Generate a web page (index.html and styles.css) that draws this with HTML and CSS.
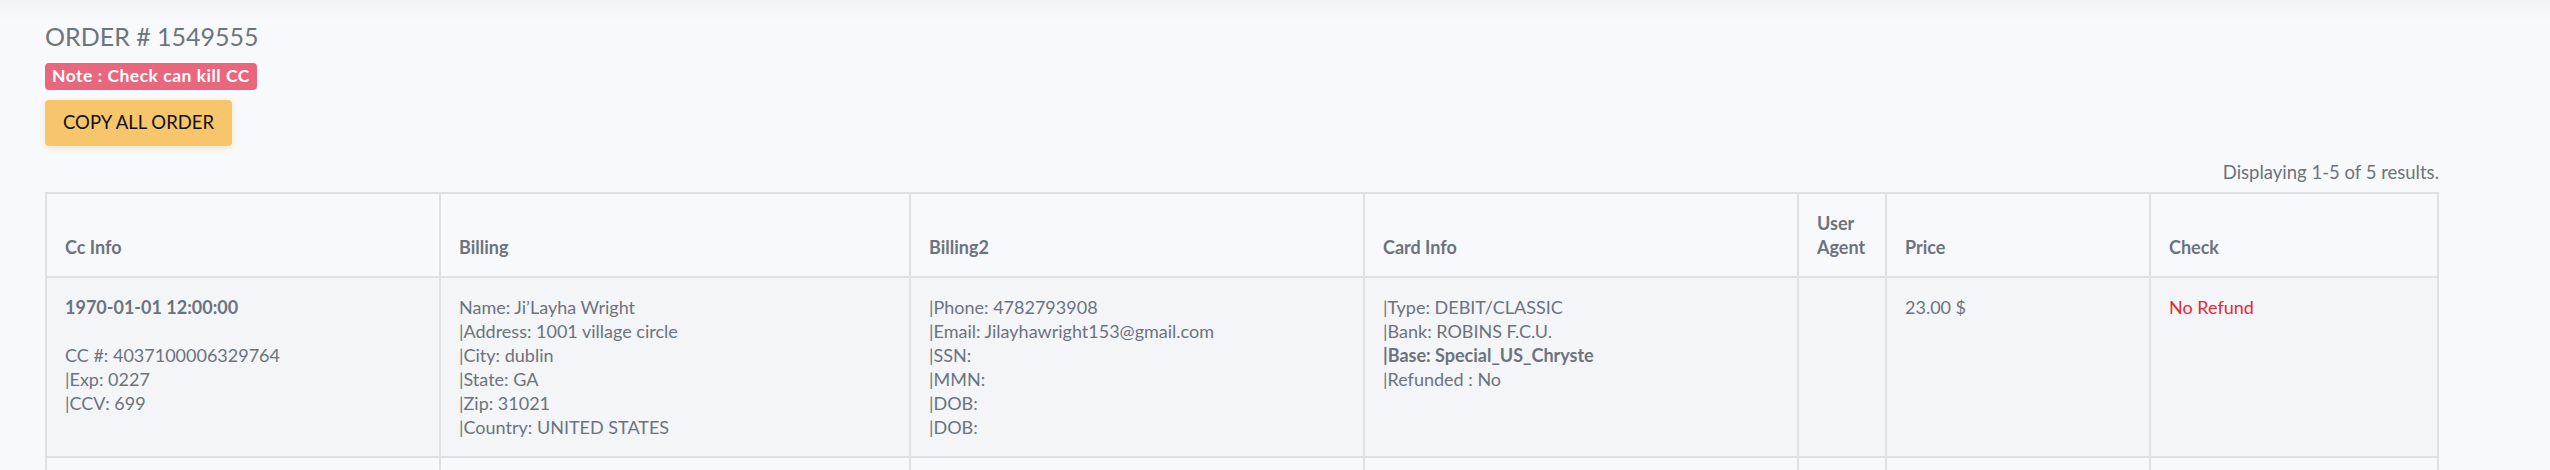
FILE: index.html
```html
<!DOCTYPE html>
<html lang="en">
<head>
    <meta charset="UTF-8">
    <meta name="viewport" content="width=device-width, initial-scale=1.0">
    <title>Order # 1549555</title>
    <link rel="stylesheet" href="styles.css">
</head>
<body>
    <div class="topbar"></div>

    <div class="content">
        <h1 class="order-title">ORDER # 1549555</h1>
        <div><span class="badge">Note : Check can kill CC</span></div>
        <button class="btn-copy">COPY ALL ORDER</button>

        <div class="orders">
            <div class="summary">Displaying 1-5 of 5 results.</div>
            <table class="order-table">
                <thead>
                    <tr>
                        <th class="col-cc">Cc Info</th>
                        <th class="col-billing">Billing</th>
                        <th class="col-billing2">Billing2</th>
                        <th class="col-card">Card Info</th>
                        <th class="col-agent">User Agent</th>
                        <th class="col-price">Price</th>
                        <th class="col-check">Check</th>
                    </tr>
                </thead>
                <tbody>
                    <tr class="odd">
                        <td>
                            <b>1970-01-01 12:00:00</b><br><br>
                            CC #: 4037100006329764<br>
                            |Exp: 0227<br>
                            |CCV: 699
                        </td>
                        <td>
                            Name: Ji’Layha Wright<br>
                            |Address: 1001 village circle<br>
                            |City: dublin<br>
                            |State: GA<br>
                            |Zip: 31021<br>
                            |Country: UNITED STATES
                        </td>
                        <td>
                            |Phone: 4782793908<br>
                            |Email: Jilayhawright153@gmail.com<br>
                            |SSN: <br>
                            |MMN: <br>
                            |DOB: <br>
                            |DOB: 
                        </td>
                        <td>
                            |Type: DEBIT/CLASSIC<br>
                            |Bank: ROBINS F.C.U.<br>
                            <b>|Base: Special_US_Chryste</b><br>
                            |Refunded : No
                        </td>
                        <td></td>
                        <td>23.00 $</td>
                        <td><span class="no-refund">No Refund</span></td>
                    </tr>
                    <tr class="even">
                        <td></td>
                        <td></td>
                        <td></td>
                        <td></td>
                        <td></td>
                        <td></td>
                        <td></td>
                    </tr>
                </tbody>
            </table>
        </div>
    </div>
</body>
</html>
```

FILE: styles.css
```css
* {
    box-sizing: border-box;
}
body {
    margin: 0;
    font-family: 'Lato', 'Liberation Sans', sans-serif;
    background-color: #f8f9fc;
    color: #6c737d;
}
.topbar {
    height: 21px;
    background: linear-gradient(180deg, #f2f3f6, #f8f9fc);
}
.content {
    padding: 0 0 0 45px;
}
.order-title {
    margin: 0;
    font-size: 25px;
    line-height: 30px;
    font-weight: 400;
    color: #6c757d;
}
.badge {
    display: inline-block;
    margin-top: 12px;
    padding: 3px 7px 5px;
    font-size: 17.5px;
    line-height: 19px;
    font-weight: 700;
    letter-spacing: 0.5px;
    color: #fff;
    background-color: #e9677d;
    border-radius: 4px;
}
.btn-copy {
    display: block;
    margin-top: 10px;
    padding: 10px 18px 12px;
    font-family: inherit;
    font-size: 18.5px;
    line-height: 24px;
    color: #111;
    background-color: #f7c56b;
    border: none;
    border-radius: 4px;
    box-shadow: 0 2px 6px rgba(246, 194, 100, 0.35);
}
.orders {
    width: 2394px;
}
.summary {
    margin-top: 14px;
    margin-bottom: 8px;
    text-align: right;
    font-size: 18.5px;
    line-height: 24px;
}
.order-table {
    width: 2394px;
    table-layout: fixed;
    border-collapse: separate;
    border-spacing: 0;
    border-top: 2px solid #dfe1e6;
    border-left: 2px solid #dfe1e6;
    font-size: 18px;
    line-height: 24px;
}
.order-table th,
.order-table td {
    padding: 17px 18px;
    border-right: 2px solid #dfe1e6;
    border-bottom: 2px solid #dfe1e6;
    text-align: left;
}
.order-table th {
    vertical-align: bottom;
    font-weight: 700;
}
.order-table td {
    vertical-align: top;
}
.order-table b {
    font-weight: 700;
}
.order-table tr.odd td {
    background-color: #f4f5f9;
}
.order-table tr.even td {
    height: 100px;
}
.col-cc { width: 394px; }
.col-billing { width: 470px; }
.col-billing2 { width: 454px; }
.col-card { width: 434px; }
.col-agent { width: 88px; }
.col-price { width: 264px; }
.col-check { width: 288px; }
.no-refund {
    color: #e8282c;
}
```
